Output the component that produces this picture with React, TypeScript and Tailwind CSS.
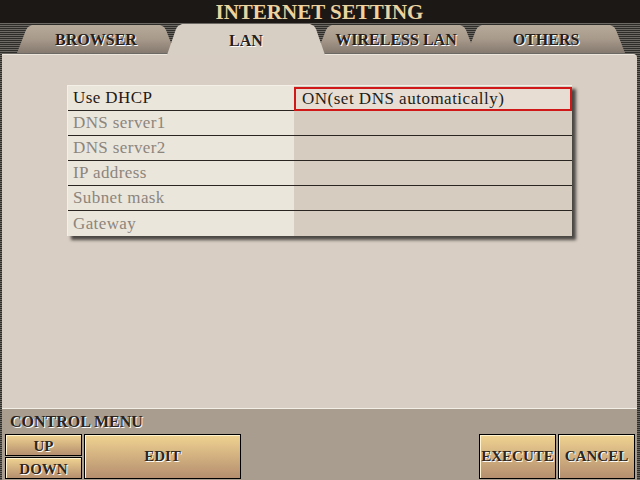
import React from "react";

const tabs = [
    { label: "BROWSER", active: false, z: "z-[3]" },
    { label: "LAN", active: true, z: "z-[5]" },
    { label: "WIRELESS LAN", active: false, z: "z-[2]" },
    { label: "OTHERS", active: false, z: "z-[1]" },
];

const rows = [
    { label: "Use DHCP", value: "ON(set DNS automatically)", on: true },
    { label: "DNS server1", value: "", on: false },
    { label: "DNS server2", value: "", on: false },
    { label: "IP address", value: "", on: false },
    { label: "Subnet mask", value: "", on: false },
    { label: "Gateway", value: "", on: false },
];

const serif = "font-['Liberation_Serif',serif]";
const emboss = "[text-shadow:1px_1px_0_#ffffff]";

const Btn = ({ label, className }: { label: string; className: string }) => (
    <div
        className={`flex items-center justify-center border border-black bg-gradient-to-b from-[#f0d391] to-[#b58f6f] shadow-[inset_1px_1px_0_#fff3d0] ${className}`}
    >
        <span className={`text-[15px] leading-none font-bold text-[#2e2620] ${emboss}`}>{label}</span>
    </div>
);

const App = () => {
    return (
        <div
            className={`w-[640px] h-[480px] flex flex-col overflow-hidden ${serif} bg-[repeating-linear-gradient(180deg,#2f2d2a_0px,#2f2d2a_1px,#6c6965_1px,#6c6965_2px)]`}
        >
            {/* title */}
            <div className="h-[23px] shrink-0 bg-[#1c1815] flex items-center justify-center">
                <span className="text-[21px] font-bold text-[#ecd3a0] leading-none mt-[1px] ml-[-1px]">
                    INTERNET SETTING
                </span>
            </div>

            {/* tabs */}
            <div className="h-[31px] shrink-0 flex pl-[17px] pt-[1px]">
                {tabs.map((t, i) => (
                    <div
                        key={t.label}
                        className={`relative ${t.z} w-[158px] ${i > 0 ? "ml-[-8px]" : ""} ${
                            t.active ? "h-[31px]" : "h-[28px] mt-[1px]"
                        } [clip-path:polygon(0_100%,9px_5px,11px_2px,15px_0,143px_0,147px_2px,149px_5px,158px_100%)] ${
                            t.active
                                ? "bg-[#d8cfc4]"
                                : "bg-gradient-to-b from-[#b6aa9b] via-[#a89a8b] to-[#857a70]"
                        } flex items-center justify-center`}
                    >
                        <span className={`text-[16px] font-bold text-[#26201c] ${emboss} mt-[2px]`}>
                            {t.label}
                        </span>
                    </div>
                ))}
            </div>

            {/* main panel */}
            <div className="shrink-0 mx-[2px] mr-[3px] h-[354px] bg-[#d8cec3] rounded-tr-[4px] border-t border-[#ece6dd] pt-[30px] pl-[65px]">
                <div className="w-[505px] border-t border-l border-[#f4f0e8] shadow-[4px_4px_3px_rgba(0,0,0,0.65)]">
                    {rows.map((r, i) => (
                        <div
                            key={r.label}
                            className={`flex h-[25px] ${i < rows.length - 1 ? "border-b border-[#2a2520]" : ""}`}
                        >
                            <div
                                className={`w-[226px] bg-[#ebe6dc] pl-[5px] flex items-center text-[17px] tracking-[0.4px] ${
                                    r.on ? "text-[#1e1a16]" : "text-[#8b857c]"
                                }`}
                            >
                                {r.label}
                            </div>
                            <div
                                className={`flex-1 flex items-center text-[17px] tracking-[0.5px] text-[#221d18] ${
                                    r.on
                                        ? "bg-[#e8ddd3] border-2 border-[#d01818] pl-[6px] mt-[1px] h-[24px] mb-[-1px]"
                                        : "bg-[#d6ccc0] pl-[8px]"
                                }`}
                            >
                                {r.value}
                            </div>
                        </div>
                    ))}
                </div>
            </div>

            {/* control menu */}
            <div className="mx-[2px] mr-[3px] flex-1 min-h-0 bg-[#a99d8f] border-t border-[#f3eee6] flex flex-col pl-[3px] pr-[2px]">
                <div className={`h-[25px] shrink-0 flex items-center pl-[5px] pt-[1px] text-[16px] font-bold text-[#2a231e] ${emboss}`}>
                    CONTROL MENU
                </div>
                <div className="flex-1 min-h-0 flex gap-[2px] pb-[1px]">
                    <div className="w-[77px] flex flex-col gap-[1px]">
                        <Btn label="UP" className="flex-1 min-h-0 pt-[3px]" />
                        <Btn label="DOWN" className="flex-1 min-h-0 pt-[3px]" />
                    </div>
                    <Btn label="EDIT" className="w-[157px]" />
                    <div className="flex-1" />
                    <Btn label="EXECUTE" className="w-[77px]" />
                    <Btn label="CANCEL" className="w-[77px]" />
                </div>
            </div>
        </div>
    );
};

export default App;
